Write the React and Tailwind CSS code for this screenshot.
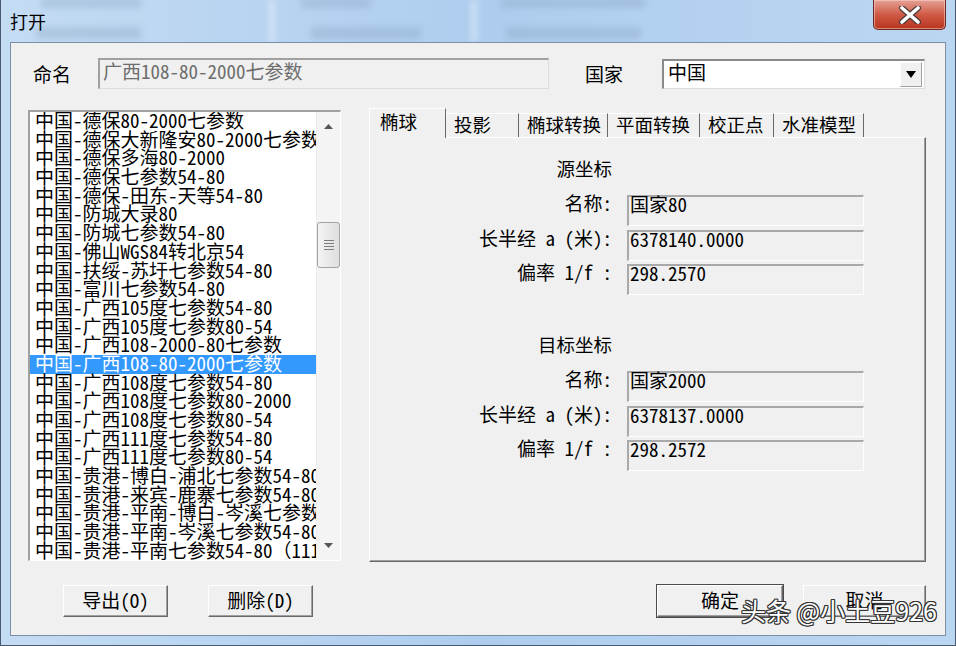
import React from "react";

const items = [
  "中国-德保80-2000七参数",
  "中国-德保大新隆安80-2000七参数",
  "中国-德保多海80-2000",
  "中国-德保七参数54-80",
  "中国-德保-田东-天等54-80",
  "中国-防城大录80",
  "中国-防城七参数54-80",
  "中国-佛山WGS84转北京54",
  "中国-扶绥-苏圩七参数54-80",
  "中国-富川七参数54-80",
  "中国-广西105度七参数54-80",
  "中国-广西105度七参数80-54",
  "中国-广西108-2000-80七参数",
  "中国-广西108-80-2000七参数",
  "中国-广西108度七参数54-80",
  "中国-广西108度七参数80-2000",
  "中国-广西108度七参数80-54",
  "中国-广西111度七参数54-80",
  "中国-广西111度七参数80-54",
  "中国-贵港-博白-浦北七参数54-80",
  "中国-贵港-来宾-鹿寨七参数54-80",
  "中国-贵港-平南-博白-岑溪七参数54-80",
  "中国-贵港-平南-岑溪七参数54-80",
  "中国-贵港-平南七参数54-80（111度）",
];

const tabs = [
  { label: "投影", w: "w-[73px]" },
  { label: "椭球转换", w: "w-[89px]" },
  { label: "平面转换", w: "w-[92px]" },
  { label: "校正点", w: "w-[74px]" },
  { label: "水准模型", w: "w-[90px]" },
];

function ValueBox({ children }) {
  return (
    <div className="ml-[15px] h-[31px] w-[237px] border-t-2 border-l-2 border-r border-b border-t-[#a9a9a9] border-l-[#a9a9a9] border-r-white border-b-white bg-[#f0f0f0] pl-[1px] pt-[1px] text-[19px] leading-[12px] text-black whitespace-nowrap">
      {children}
    </div>
  );
}

function Row({ label, value, first }) {
  return (
    <div className={first ? "flex items-start" : "mt-[3.5px] flex items-start"}>
      <div className="w-[242px] pt-[2px] text-right text-[19px] leading-[12px] whitespace-pre">{label}</div>
      <ValueBox>{value}</ValueBox>
    </div>
  );
}

function Button({ children, className }) {
  return (
    <div
      className={
        "flex h-[32px] items-center justify-center border border-t-white border-l-white border-r-[#696969] border-b-[#696969] bg-[#f0f0f0] pb-[3px] text-[19px] leading-[19px] shadow-[inset_-1px_-1px_0_#a0a0a0] " +
        className
      }
    >
      {children}
    </div>
  );
}

export default function App() {
  return (
    <div className="relative flex h-[646px] w-[956px] flex-col overflow-hidden border-x border-b border-[#4a5a6e] bg-gradient-to-r from-[#c4dcf3] via-[#aecdee] to-[#bad6f1] text-black [font-family:'Noto_Sans_Mono_CJK_SC','Noto_Sans_CJK_SC',monospace]">
      {/* blurred background seen through the glass frame */}
      <div className="pointer-events-none absolute left-[40px] top-[-2px] h-[10px] w-[100px] bg-[#7f9ab8] opacity-30 blur-[3px]" />
      <div className="pointer-events-none absolute left-[35px] top-[27px] h-[12px] w-[105px] bg-[#7f9ab8] opacity-30 blur-[3px]" />
      <div className="pointer-events-none absolute left-[300px] top-[-2px] h-[10px] w-[70px] bg-[#7f9ab8] opacity-30 blur-[3px]" />
      <div className="pointer-events-none absolute left-[310px] top-[27px] h-[12px] w-[110px] bg-[#7f9ab8] opacity-30 blur-[3px]" />
      <div className="pointer-events-none absolute left-[500px] top-[-2px] h-[10px] w-[145px] bg-[#7f9ab8] opacity-30 blur-[3px]" />
      <div className="pointer-events-none absolute left-[505px] top-[27px] h-[12px] w-[135px] bg-[#7f9ab8] opacity-30 blur-[3px]" />
      <div className="pointer-events-none absolute left-[268px] top-0 h-[42px] w-[6px] bg-white opacity-40 blur-[3px]" />
      <div className="pointer-events-none absolute left-[470px] top-0 h-[42px] w-[6px] bg-white opacity-40 blur-[3px]" />

      {/* title bar */}
      <div className="relative flex h-[42px] items-start justify-between">
        <div className="pl-[9px] pt-[11px] text-[18px] leading-[20px] text-black">打开</div>
        <div className="mr-[9px] flex h-[30px] w-[73px] items-center justify-center rounded-b-[5px] border border-t-0 border-[#6b2a20] bg-gradient-to-b from-[#e3a195] via-[#cf5a46] to-[#b8331d] shadow-[inset_0_0_0_1px_rgba(255,220,210,0.5)]">
          <svg width="26" height="18" viewBox="0 0 26 18">
            <path d="M5 2 L21 16 M21 2 L5 16" stroke="#4a3a38" strokeWidth="6" strokeLinecap="round" />
            <path d="M5 2 L21 16 M21 2 L5 16" stroke="#ffffff" strokeWidth="3.6" strokeLinecap="round" />
          </svg>
        </div>
      </div>

      {/* client */}
      <div className="relative mx-[9px] flex h-[594px] flex-col border border-[#7d8fa6] bg-[#f0f0f0]">
        {/* row 1 */}
        <div className="mt-[15px] flex h-[31px] items-center">
          <div className="w-[87px] pl-[22px] text-[19px] leading-[19px]">命名</div>
          <div className="h-[31px] w-[451px] border-t-2 border-l-2 border-r border-b border-t-[#a0a0a0] border-l-[#a0a0a0] border-r-[#dcdcdc] border-b-[#dcdcdc] bg-[#f0f0f0] pl-[3px] pt-[1px] text-[19px] leading-[19px] text-[#6d6d6d]">
            广西108-80-2000七参数
          </div>
          <div className="w-[113px] pl-[36px] text-[19px] leading-[19px]">国家</div>
          <div className="flex h-[30px] w-[263px] items-center justify-between border-t-2 border-l-2 border-r border-b border-t-[#8a8a8a] border-l-[#8a8a8a] border-r-[#dcdcdc] border-b-[#dcdcdc] bg-white">
            <div className="pl-[4px] pb-[5px] text-[19px] leading-[19px]">中国</div>
            <div className="mr-[2px] flex h-[25px] w-[22px] items-center justify-center border border-t-white border-l-white border-r-[#a0a0a0] border-b-[#a0a0a0] bg-[#f0f0f0]">
              <svg width="10" height="7" viewBox="0 0 10 7">
                <path d="M0 0 H10 L5 7 Z" fill="#000" />
              </svg>
            </div>
          </div>
        </div>

        {/* row 2 */}
        <div className="mt-[19px] flex items-start">
          {/* list */}
          <div className="ml-[17px] mt-[2px] flex h-[451px] w-[313px] border-t-2 border-l-2 border-r border-b border-t-[#a0a0a0] border-l-[#a0a0a0] border-r-white border-b-white bg-white">
            <div className="h-full w-[286px] overflow-hidden">
              {items.map((t, i) => (
                <div
                  key={i}
                  className={
                    i === 13
                      ? "h-[18.7px] whitespace-nowrap bg-[#3399ff] pl-[5px] text-[19px] leading-[15px] text-white"
                      : "h-[18.7px] whitespace-nowrap pl-[5px] text-[19px] leading-[15px] text-black"
                  }
                >
                  {t}
                </div>
              ))}
            </div>
            {/* scrollbar */}
            <div className="flex h-full w-[24px] flex-col border-l border-[#ececec] bg-[#f4f4f4]">
              <div className="flex h-[24px] items-center justify-center pt-[4px]">
                <svg width="9" height="5" viewBox="0 0 9 5">
                  <path d="M0 5 L4.5 0 L9 5 Z" fill="#555" />
                </svg>
              </div>
              <div className="mt-[86px] flex h-[46px] w-[23px] flex-col items-center justify-center gap-[2px] rounded-[3px] border border-[#a3a3a3] bg-gradient-to-r from-[#f4f4f4] to-[#dedede]">
                <div className="h-[1px] w-[10px] bg-[#7c7c7c]" />
                <div className="h-[1px] w-[10px] bg-[#7c7c7c]" />
                <div className="h-[1px] w-[10px] bg-[#7c7c7c]" />
                <div className="h-[1px] w-[10px] bg-[#7c7c7c]" />
              </div>
              <div className="flex-1" />
              <div className="flex h-[24px] items-center justify-center pb-[6px]">
                <svg width="9" height="5" viewBox="0 0 9 5">
                  <path d="M0 0 L9 0 L4.5 5 Z" fill="#555" />
                </svg>
              </div>
            </div>
          </div>

          {/* tabs + panel */}
          <div className="ml-[28px] flex w-[557px] flex-col">
            <div className="flex h-[29px] items-end">
              <div className="relative z-10 -mb-[1px] flex h-[30px] w-[77px] items-center border-t border-l border-r border-t-white border-l-white border-r-[#696969] bg-[#f0f0f0] pb-[4px] pl-[10px] text-[18.5px] leading-[19px]">
                椭球
              </div>
              {tabs.map((t) => (
                <div
                  key={t.label}
                  className={
                    "flex h-[24px] items-center border-t border-r border-t-white border-r-[#696969] pb-[3px] pl-[8px] text-[18.5px] leading-[19px] " +
                    t.w
                  }
                >
                  {t.label}
                </div>
              ))}
            </div>
            <div className="flex h-[425px] flex-col border border-t-white border-l-white border-r-[#696969] border-b-[#696969] shadow-[inset_-1px_-1px_0_#a0a0a0]">
              <div className="mt-[21px] w-[242px] text-right text-[18.5px] leading-[19px]">源坐标</div>
              <div className="mt-[17px]">
                <Row first label="名称:" value="国家80" />
                <Row label="长半经 a (米):" value="6378140.0000" />
                <Row label="偏率 1/f :" value="298.2570" />
              </div>
              <div className="mt-[40px] w-[242px] text-right text-[18.5px] leading-[19px]">目标坐标</div>
              <div className="mt-[17px]">
                <Row first label="名称:" value="国家2000" />
                <Row label="长半经 a (米):" value="6378137.0000" />
                <Row label="偏率 1/f :" value="298.2572" />
              </div>
            </div>
          </div>
        </div>

        {/* row 3 buttons */}
        <div className="mt-[23px] flex">
          <Button className="ml-[52px] w-[105px]">导出(O)</Button>
          <Button className="ml-[40px] w-[105px]">删除(D)</Button>
          <Button className="ml-[344px] w-[126px] outline outline-1 outline-[#4a4a4a]">确定</Button>
          <Button className="ml-[20px] w-[123px]">取消</Button>
        </div>
      </div>

      {/* watermark */}
      <div className="absolute left-[740px] top-[595px] text-[25px] leading-[30px] text-white [font-family:'Noto_Sans_CJK_SC',sans-serif] [text-shadow:1px_1px_0_#333,-1px_-1px_0_#333,1px_-1px_0_#333,-1px_1px_0_#333,0_1px_0_#333,0_-1px_0_#333,1px_0_0_#333,-1px_0_0_#333]">
        头条 @小土豆926
      </div>
    </div>
  );
}
